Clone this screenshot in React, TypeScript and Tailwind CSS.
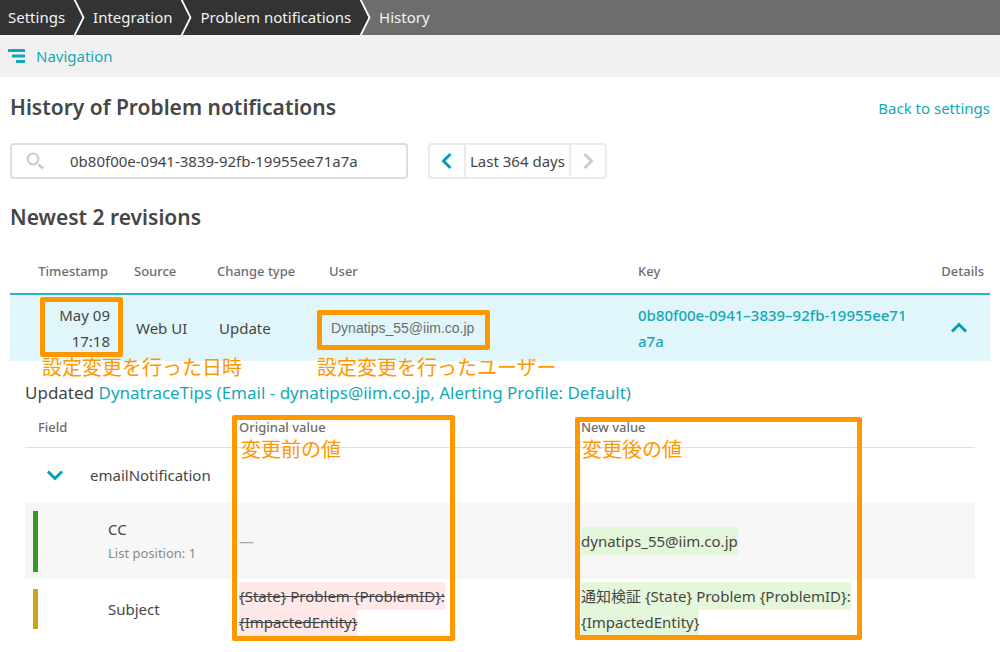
import type { ReactNode } from 'react'

interface Revision {
  date: string
  time: string
  source: string
  changeType: string
  user: string
  keyId: string
}

const breadcrumbs = ['Settings', 'Integration', 'Problem notifications']

const searchValue = '0b80f00e-0941-3839-92fb-19955ee71a7a'

const revision: Revision = {
  date: 'May 09',
  time: '17:18',
  source: 'Web UI',
  changeType: 'Update',
  user: 'Dynatips_55@iim.co.jp',
  keyId: '0b80f00e-0941–3839–92fb-19955ee71a7a',
}

function Chevron({ className, d }: { className: string; d: string }) {
  return (
    <svg viewBox="0 0 18 18" className={className} fill="none" stroke="currentColor" strokeWidth="3">
      <path d={d} />
    </svg>
  )
}

function CrumbSeparator({ last }: { last: boolean }) {
  return (
    <svg viewBox="0 0 12 35" className="h-[35px] w-3" aria-hidden="true">
      {last && <path d="M1.5 0L10.5 17.5L1.5 35H12V0Z" fill="#6d6d6d" />}
      <path d="M1.5 -0.5L10.5 17.5L1.5 35.5" fill="none" stroke="#fff" strokeWidth="1.8" />
    </svg>
  )
}

// Orange marker text placed next to a highlighted area
function Note({ className, children }: { className: string; children: ReactNode }) {
  return (
    <span
      className={`absolute whitespace-nowrap text-xl leading-6 font-normal text-[#ff9800] font-['Noto_Sans_CJK_JP',sans-serif] ${className}`}
    >
      {children}
    </span>
  )
}

function Marker({ className }: { className: string }) {
  return <div className={`pointer-events-none absolute rounded-xs border-5 border-[#ff9800] ${className}`} />
}

export default function App() {
  return (
    <div className="min-h-screen bg-white font-['Noto_Sans','Noto_Sans_CJK_JP',sans-serif] text-[15px] text-[#454646]">
      {/* Breadcrumbs */}
      <nav className="flex h-[35px] items-center bg-[#6d6d6d] text-[#f2f2f2]">
        <ol className="flex items-center">
          {breadcrumbs.map((item, i) => (
            <li key={item} className="flex h-[35px] items-center bg-[#333]">
              <a href="#" className="px-2">
                {item}
              </a>
              <CrumbSeparator last={i === breadcrumbs.length - 1} />
            </li>
          ))}
          <li className="pl-2">History</li>
        </ol>
      </nav>

      <div className="flex h-[42px] items-center bg-[#f1f1f1] px-2">
        <button type="button" className="flex items-center gap-[11px] text-[#14a8b5]">
          <svg viewBox="0 0 17 14" className="h-[14px] w-[17px]" fill="none" stroke="currentColor" strokeWidth="2.8" aria-hidden="true">
            <path d="M0 1.5H17M4 7H17M8 12.5H17" />
          </svg>
          Navigation
        </button>
      </div>

      <main className="px-[10px]">
        <div className="flex h-[62px] items-center justify-between">
          <h1 className="text-[21px] font-semibold">History of Problem notifications</h1>
          <a href="#" className="text-[#14a8b5]">
            Back to settings
          </a>
        </div>

        {/* Filters */}
        <div className="mt-1 flex gap-5">
          <label className="flex h-9 w-[398px] items-center rounded-sm border-2 border-[#dcdcdc] pl-[14px]">
            <svg viewBox="0 0 19 19" className="size-[19px] shrink-0 text-[#cbcbcb]" fill="none" stroke="currentColor" aria-hidden="true">
              <circle cx="7" cy="7" r="5.4" strokeWidth="2" />
              <path d="M12.5 12.5L17 16.5" strokeWidth="3" />
            </svg>
            <input
              type="text"
              aria-label="Filter"
              defaultValue={searchValue}
              className="ml-[25px] min-w-0 flex-1 outline-none"
            />
          </label>
          <div className="flex h-9 items-stretch rounded-sm border-2 border-[#ebebeb]">
            <button type="button" aria-label="Previous" className="flex w-[34px] items-center justify-center text-[#00a1b2]">
              <Chevron className="size-[18px]" d="M12.5 2L5.5 9L12.5 16" />
            </button>
            <button type="button" className="border-x-2 border-[#ebebeb] px-1">
              Last 364 days
            </button>
            <button type="button" aria-label="Next" className="flex w-[34px] items-center justify-center text-[#cbcbcb]">
              <Chevron className="size-[18px]" d="M5.5 2L12.5 9L5.5 16" />
            </button>
          </div>
        </div>

        <h2 className="mt-6 text-[21px] leading-7 font-semibold">Newest 2 revisions</h2>

        {/* Revisions */}
        <table className="mt-5 w-full table-fixed text-left">
          <colgroup>
            <col className="w-[124px]" />
            <col className="w-[83px]" />
            <col className="w-[112px]" />
            <col className="w-[309px]" />
            <col />
            <col className="w-[60px]" />
          </colgroup>
          <thead>
            <tr className="h-[43px] border-b-2 border-[#2ab6c9] text-[13px] text-[#6d6d6d]">
              <th className="pr-[26px] text-right font-medium">Timestamp</th>
              <th className="font-medium">Source</th>
              <th className="font-medium">Change type</th>
              <th className="font-medium">User</th>
              <th className="font-medium">Key</th>
              <th className="pr-[6px] text-right font-medium">Details</th>
            </tr>
          </thead>
          <tbody>
            <tr className="h-[67px] bg-[#e1f6fa]">
              <td className="relative pr-6 text-right leading-[26px]">
                {revision.date}
                <br />
                {revision.time}
                <Marker className="left-[30px] top-[2px] h-[60px] w-[83px]" />
                <Note className="left-8 top-[60px]">設定変更を行った日時</Note>
              </td>
              <td className="pl-[2px]">{revision.source}</td>
              <td className="pl-[2px]">{revision.changeType}</td>
              <td className="relative pl-[2px] font-['Liberation_Sans',sans-serif] text-sm text-[#6d6d6d]">
                {revision.user}
                <Marker className="-left-3 top-[15px] h-[40px] w-[173px]" />
                <Note className="-left-3 top-[60px]">設定変更を行ったユーザー</Note>
              </td>
              <td className="break-all pr-4 leading-[26px] font-medium">
                <a href="#" className="text-[#14a8b5]">
                  {revision.keyId}
                </a>
              </td>
              <td>
                <button type="button" aria-label="Collapse" className="ml-5 block text-[#00a1b2]">
                  <Chevron className="size-[18px]" d="M2 12.5L9 5.5L16 12.5" />
                </button>
              </td>
            </tr>
          </tbody>
        </table>

        {/* Revision details */}
        <section className="px-[15px] pt-5">
          <p className="text-[17px] leading-6">
            Updated{' '}
            <a href="#" className="text-[#14a8b5]">
              DynatraceTips (Email - dynatips@iim.co.jp, Alerting Profile: Default)
            </a>
          </p>
          <div className="relative">
            <table className="w-full table-fixed text-left">
              <colgroup>
                <col className="w-[214px]" />
                <col className="w-[342px]" />
                <col />
              </colgroup>
              <thead>
                <tr className="h-[42px] border-b border-[#dedede] text-[13px] text-[#6d6d6d]">
                  <th className="pl-[13px] pt-1 font-medium">Field</th>
                  <th className="pt-1 font-medium">Original value</th>
                  <th className="pt-1 font-medium">New value</th>
                </tr>
              </thead>
              <tbody>
                <tr className="h-[56px]">
                  <td colSpan={3}>
                    <button type="button" className="flex items-center gap-[26px] pl-[21px]">
                      <Chevron className="size-[18px] text-[#00a1b2]" d="M2 5.5L9 12.5L16 5.5" />
                      emailNotification
                    </button>
                  </td>
                </tr>
                <tr className="h-[76px] bg-[#f7f7f7]">
                  <td>
                    <div className="ml-2 flex h-[61px] flex-col justify-center border-l-5 border-[#36981f] pl-[70px]">
                      <span className="leading-6">CC</span>
                      <span className="text-[13px] leading-6 text-[#898989]">List position: 1</span>
                    </div>
                  </td>
                  <td className="text-[#a8a8a8]">—</td>
                  <td>
                    <span className="bg-[#e5f7da] py-1">dynatips_55@iim.co.jp</span>
                  </td>
                </tr>
                <tr className="h-[60px]">
                  <td>
                    <div className="ml-2 flex h-10 items-center border-l-5 border-[#cda317] pl-[70px]">Subject</div>
                  </td>
                  <td className="leading-[26px]">
                    <del className="bg-[#ffe8e8] py-1">
                      {'{State} Problem {ProblemID}:'}
                      <br />
                      {'{ImpactedEntity}'}
                    </del>
                  </td>
                  <td className="leading-[26px]">
                    <ins className="bg-[#e5f7da] py-1 no-underline">
                      {'通知検証 {State} Problem {ProblemID}:'}
                      <br />
                      {'{ImpactedEntity}'}
                    </ins>
                  </td>
                </tr>
              </tbody>
            </table>
            <Marker className="left-[207px] top-[10px] h-[226px] w-[223px]" />
            <Note className="left-[216px] top-8">変更前の値</Note>
            <Marker className="left-[550px] top-[12px] h-[223px] w-[287px]" />
            <Note className="left-[557px] top-8">変更後の値</Note>
          </div>
        </section>
      </main>
    </div>
  )
}
